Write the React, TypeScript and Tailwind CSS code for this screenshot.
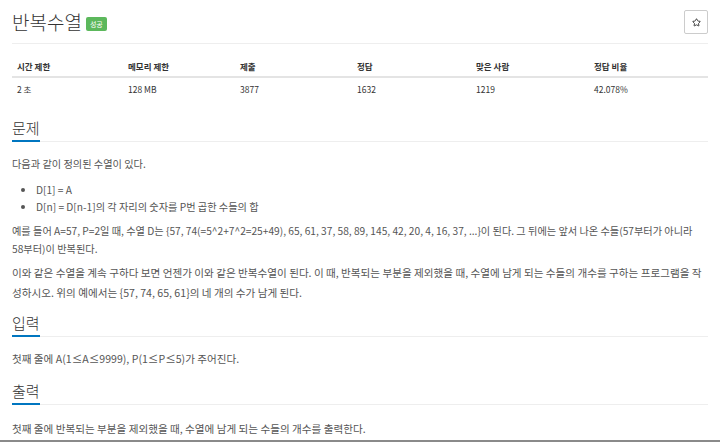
import { Star } from "lucide-react";

const stats = [
	{ label: "시간 제한", value: "2 초", w: "w-[111px]" },
	{ label: "메모리 제한", value: "128 MB", w: "w-[112px]" },
	{ label: "제출", value: "3877", w: "w-[117px]" },
	{ label: "정답", value: "1632", w: "w-[119px]" },
	{ label: "맞은 사람", value: "1219", w: "w-[118px]" },
	{ label: "정답 비율", value: "42.078%", w: "w-[119px]" },
];

function SectionTitle({ children }: { children: string }) {
	return (
		<div className="border-b border-[#eeeeee]">
			<h2 className="inline-block border-b-2 border-[#0076c0] -mb-px pb-[1px] text-[15px] font-light leading-[22px] text-[#333333]">
				{children}
			</h2>
		</div>
	);
}

export default function App() {
	return (
		<div
			className="h-[442px] overflow-hidden bg-white px-3 text-[#555555] border-b-2 border-[#8a8a8a]"
			style={{ fontFamily: '"Noto Sans CJK KR", "Open Sans", sans-serif' }}
		>
			{/* header */}
			<div className="flex items-center justify-between pt-[10px] pb-[9px] border-b border-[#eeeeee]">
				<div className="flex items-center gap-[4px]">
					<h1 className="text-[19px] font-light leading-[24px] text-[#333333]">반복수열</h1>
					<span className="mt-[4px] bg-[#5cb85c] text-white text-[7px] leading-[14px] px-[4px] rounded-[2px]">성공</span>
				</div>
				<button className="w-[24px] h-[24px] flex items-center justify-center border border-[#cccccc] rounded-[2px] bg-white">
					<Star size={9} strokeWidth={2.5} className="text-[#333333]" />
				</button>
			</div>

			{/* stats table */}
			<div className="mt-[12px] text-[8.5px] text-[#333333]">
				<div className="flex font-bold border-b-2 border-[#e4e4e4] h-[22px] items-center">
					{stats.map((s) => (
						<div key={s.label} className={`${s.w} px-[5px]`}>
							{s.label}
						</div>
					))}
				</div>
				<div className="flex h-[22px] items-center">
					{stats.map((s) => (
						<div key={s.label} className={`${s.w} px-[5px]`}>
							{s.value}
						</div>
					))}
				</div>
			</div>

			{/* 문제 */}
			<div className="mt-[15px]">
				<SectionTitle>문제</SectionTitle>
				<div className="text-[10.2px] leading-[18px] pt-[13px]">
					<p>다음과 같이 정의된 수열이 있다.</p>
					<ul className="list-disc pl-[24px] mt-[8px] leading-[17px]">
						<li>D[1] = A</li>
						<li>D[n] = D[n-1]의 각 자리의 숫자를 P번 곱한 수들의 합</li>
					</ul>
					<p className="mt-[7px] break-keep">
						예를 들어 A=57, P=2일 때, 수열 D는 {"{"}57, 74(=5^2+7^2=25+49), 65, 61, 37, 58, 89, 145, 42, 20, 4, 16, 37, ...{"}"}이
						된다. 그 뒤에는 앞서 나온 수들(57부터가 아니라 58부터)이 반복된다.
					</p>
					<p className="mt-[5px] text-[10.6px] leading-[20px]">
						이와 같은 수열을 계속 구하다 보면 언젠가 이와 같은 반복수열이 된다. 이 때, 반복되는 부분을 제외했을 때, 수열에 남게 되는 수들의
						개수를 구하는 프로그램을 작성하시오. 위의 예에서는 {"{"}57, 74, 65, 61{"}"}의 네 개의 수가 남게 된다.
					</p>
				</div>
			</div>

			{/* 입력 */}
			<div className="mt-[7px]">
				<SectionTitle>입력</SectionTitle>
				<p className="text-[10.6px] leading-[18px] pt-[13px]">첫째 줄에 A(1≤A≤9999), P(1≤P≤5)가 주어진다.</p>
			</div>

			{/* 출력 */}
			<div className="mt-[10px]">
				<SectionTitle>출력</SectionTitle>
				<p className="text-[10.6px] leading-[18px] pt-[15px]">첫째 줄에 반복되는 부분을 제외했을 때, 수열에 남게 되는 수들의 개수를 출력한다.</p>
			</div>
		</div>
	);
}
